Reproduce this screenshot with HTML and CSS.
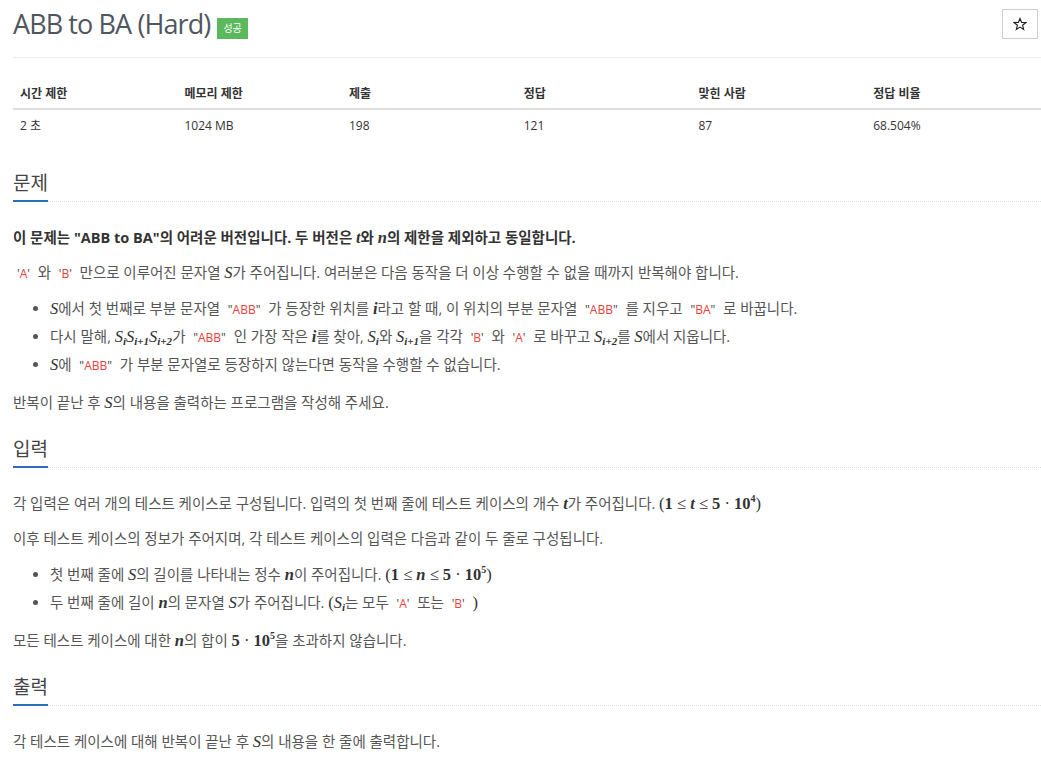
FILE: index.html
```html
<!DOCTYPE html>
<html lang="ko">
<head>
<meta charset="utf-8">
<title>ABB to BA (Hard)</title>
<link rel="stylesheet" href="styles.css">
</head>
<body>
<div class="page">
  <div class="header">
    <div class="title-wrap">
      <h1 class="title">ABB to BA (Hard)</h1>
      <span class="badge">성공</span>
    </div>
    <button class="star-btn" type="button" aria-label="즐겨찾기">
      <svg width="14" height="14" viewBox="0 0 24 24"><polygon points="12,2.5 14.8,9.2 22,9.6 16.4,14.2 18.3,21.3 12,17.3 5.7,21.3 7.6,14.2 2,9.6 9.2,9.2" fill="none" stroke="#222" stroke-width="2" stroke-linejoin="miter"/></svg>
    </button>
  </div>
  <div class="rule"></div>

  <table class="info">
    <thead>
      <tr><th class="c16">시간 제한</th><th class="c16">메모리 제한</th><th class="c17">제출</th><th class="c17">정답</th><th class="c17">맞힌 사람</th><th class="c17">정답 비율</th></tr>
    </thead>
    <tbody>
      <tr><td>2 초</td><td>1024 MB</td><td>198</td><td>121</td><td>87</td><td>68.504%</td></tr>
    </tbody>
  </table>

  <section class="section">
    <div class="headline"><h2><span>문제</span></h2></div>
    <p class="strong">이 문제는 "ABB to BA"의 어려운 버전입니다. 두 버전은 <i class="m b">t</i>와 <i class="m b">n</i>의 제한을 제외하고 동일합니다.</p>
    <p><code><span class="q">'</span>A<span class="q">'</span></code> 와 <code><span class="q">'</span>B<span class="q">'</span></code> 만으로 이루어진 문자열 <i class="m">S</i>가 주어집니다. 여러분은 다음 동작을 더 이상 수행할 수 없을 때까지 반복해야 합니다.</p>
    <ul>
      <li><i class="m">S</i>에서 첫 번째로 부분 문자열 <code><span class="q">"</span>ABB<span class="q">"</span></code> 가 등장한 위치를 <i class="m b">i</i>라고 할 때, 이 위치의 부분 문자열 <code><span class="q">"</span>ABB<span class="q">"</span></code> 를 지우고 <code><span class="q">"</span>BA<span class="q">"</span></code> 로 바꿉니다.</li>
      <li>다시 말해, <i class="m">S<sub>i</sub>S<sub>i+1</sub>S<sub>i+2</sub></i>가 <code><span class="q">"</span>ABB<span class="q">"</span></code> 인 가장 작은 <i class="m b">i</i>를 찾아, <i class="m">S<sub>i</sub></i>와 <i class="m">S<sub>i+1</sub></i>을 각각 <code><span class="q">'</span>B<span class="q">'</span></code> 와 <code><span class="q">'</span>A<span class="q">'</span></code> 로 바꾸고 <i class="m">S<sub>i+2</sub></i>를 <i class="m">S</i>에서 지웁니다.</li>
      <li><i class="m">S</i>에 <code><span class="q">"</span>ABB<span class="q">"</span></code> 가 부분 문자열로 등장하지 않는다면 동작을 수행할 수 없습니다.</li>
    </ul>
    <p>반복이 끝난 후 <i class="m">S</i>의 내용을 출력하는 프로그램을 작성해 주세요.</p>
  </section>

  <section class="section">
    <div class="headline"><h2><span>입력</span></h2></div>
    <p>각 입력은 여러 개의 테스트 케이스로 구성됩니다. 입력의 첫 번째 줄에 테스트 케이스의 개수 <i class="m b">t</i>가 주어집니다. <span class="mr">(<b>1</b> ≤ <i class="b">t</i> ≤ <b>5</b> · <b>10<sup>4</sup></b>)</span></p>
    <p>이후 테스트 케이스의 정보가 주어지며, 각 테스트 케이스의 입력은 다음과 같이 두 줄로 구성됩니다.</p>
    <ul>
      <li>첫 번째 줄에 <i class="m">S</i>의 길이를 나타내는 정수 <i class="m b">n</i>이 주어집니다. <span class="mr">(<b>1</b> ≤ <i class="b">n</i> ≤ <b>5</b> · <b>10<sup>5</sup></b>)</span></li>
      <li>두 번째 줄에 길이 <i class="m b">n</i>의 문자열 <i class="m">S</i>가 주어집니다. <span class="mr">(</span><i class="m">S<sub>i</sub></i>는 모두 <code><span class="q">'</span>A<span class="q">'</span></code> 또는 <code><span class="q">'</span>B<span class="q">'</span></code> <span class="mr">)</span></li>
    </ul>
    <p>모든 테스트 케이스에 대한 <i class="m b">n</i>의 합이 <span class="mr"><b>5</b> · <b>10<sup>5</sup></b></span>을 초과하지 않습니다.</p>
  </section>

  <section class="section">
    <div class="headline"><h2><span>출력</span></h2></div>
    <p>각 테스트 케이스에 대해 반복이 끝난 후 <i class="m">S</i>의 내용을 한 줄에 출력합니다.</p>
  </section>
</div>
</body>
</html>
```

FILE: styles.css
```css
html, body {
  margin: 0;
  padding: 0;
  background: #fff;
}

body {
  font-family: "Open Sans", "Noto Sans CJK KR", sans-serif;
  font-size: 14.5px;
  color: #555;
  overflow: hidden;
}

.page {
  padding: 8px 0 0 13px;
}

.header {
  display: flex;
  justify-content: space-between;
  align-items: flex-start;
  height: 40px;
  padding-right: 3px;
}

.title-wrap {
  display: flex;
  align-items: center;
  gap: 7px;
}

.title {
  margin: 0;
  font-size: 27px;
  line-height: 32px;
  font-weight: 400;
  letter-spacing: -0.9px;
  color: #4f5660;
}

.badge {
  margin-top: 8px;
  background: #5cb85c;
  color: #fff;
  font-size: 10px;
  line-height: 21px;
  height: 21px;
  padding: 0 6px;
  font-weight: 400;
}

.star-btn {
  margin-top: 1px;
  width: 36px;
  height: 30px;
  border: 1px solid #ccc;
  background: #fff;
  padding: 0;
  display: flex;
  align-items: center;
  justify-content: center;
}

.rule {
  margin-top: 9px;
  border-top: 1px solid #eee;
}

.info {
  width: 100%;
  margin-top: 19px;
  border-collapse: collapse;
  font-size: 12px;
  color: #333;
}

.info th {
  text-align: left;
  font-weight: 700;
  padding: 8px 7px 6px;
  line-height: 17px;
  border-bottom: 2px solid #ddd;
}

.info td {
  padding: 7px 7px;
  line-height: 17px;
}

.c16 { width: 16%; }
.c17 { width: 17%; }

.section {
  margin-top: 30px;
}

.section + .section {
  margin-top: 22px;
}

.headline {
  border-bottom: 1px dotted #d7dde6;
  margin-bottom: 23px;
}

.headline h2 {
  margin: 0 0 -1px 0;
  font-size: 19px;
  font-weight: 400;
  line-height: 24px;
  color: #444;
}

.headline h2 span {
  display: inline-block;
  padding-bottom: 5px;
  border-bottom: 2px solid #2a6fb7;
}

p {
  margin: 0 0 10px;
  line-height: 25px;
}

p.strong {
  font-weight: 700;
  color: #333;
}

ul {
  margin: 0 0 11px;
  padding-left: 37px;
}

li {
  line-height: 28px;
}

code {
  font-family: "Open Sans", sans-serif;
  font-size: 12px;
  line-height: 0;
  color: #e8403a;
  padding: 0 4px;
  font-weight: 400;
}

code .q {
  color: #444;
}

.m {
  font-family: "Liberation Serif", "DejaVu Serif", serif;
  font-style: italic;
  font-size: 16.5px;
  line-height: 0;
  color: #333;
  font-weight: 400;
}

.m.b, .mr .b {
  font-weight: 700;
}

.mr {
  font-family: "Liberation Serif", "DejaVu Serif", serif;
  font-size: 16.5px;
  line-height: 0;
  color: #333;
}

.mr b {
  font-weight: 700;
}

.mr i {
  font-style: italic;
}

sub {
  font-size: 11px;
  vertical-align: -3px;
  line-height: 0;
  font-weight: 700;
}

sup {
  font-size: 10px;
  vertical-align: 7px;
  line-height: 0;
}
```
